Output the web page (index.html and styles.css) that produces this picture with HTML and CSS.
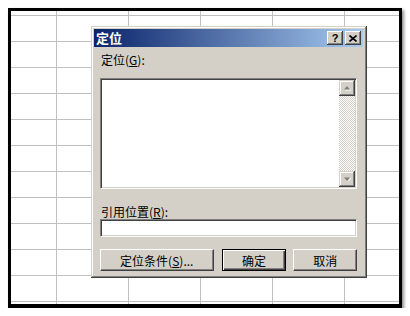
FILE: index.html
```html
<!DOCTYPE html>
<html lang="zh-CN">
<head>
  <meta charset="UTF-8">
  <meta name="viewport" content="width=device-width, initial-scale=1.0">
  <title>定位</title>
  <link rel="stylesheet" href="styles.css">
</head>
<body>
  <!-- Spreadsheet grid in a black frame -->
  <div class="sheet">

    <!-- Go To dialog -->
    <div class="dialog">
      <div class="titlebar">
        <span class="title">定位</span>
        <span class="tbtn tbtn-help">?</span>
        <span class="tbtn">
          <svg width="8" height="7" viewBox="0 0 8 7"><path d="M0.5 0.5 L7.5 6.5 M7.5 0.5 L0.5 6.5" stroke="#000" stroke-width="1.6" fill="none"/></svg>
        </span>
      </div>

      <div class="dlg-body">
        <div class="label">定位(<u>G</u>):</div>

        <div class="field listbox">
          <div class="list"></div>
          <div class="vscroll">
            <div class="sbtn">
              <svg width="7" height="5" viewBox="0 0 7 5"><path d="M1 4 L7 4" stroke="#fff"/><path d="M3 0 L0 3.5 L6 3.5 Z" fill="#808080"/></svg>
            </div>
            <div class="track"></div>
            <div class="sbtn">
              <svg width="7" height="5" viewBox="0 0 7 5"><path d="M0 0.5 L6 0.5 L3 4 Z" fill="#808080"/><path d="M4 4.5 L7 1" stroke="#fff"/></svg>
            </div>
          </div>
        </div>

        <div class="label label-ref">引用位置(<u>R</u>):</div>
        <div class="field input"></div>

        <div class="buttons">
          <button class="btn btn-special">定位条件(<u>S</u>)...</button>
          <button class="btn btn-default">确定</button>
          <button class="btn btn-cancel">取消</button>
        </div>
      </div>
    </div>

  </div>
</body>
</html>
```

FILE: styles.css
```css
body {
  margin: 0;
  background: #fff;
  font-family: "Noto Sans CJK SC", "SimSun", sans-serif;
  font-size: 12px;
  color: #000;
}
.sheet {
  position: relative;
  box-sizing: border-box;
  margin: 8px 0 0 8px;
  width: 394px;
  height: 300px;
  border-style: solid;
  border-color: #000;
  border-width: 3px 3px 4px 3px;
  box-shadow: 2px 2px 3px rgba(0, 0, 0, 0.45);
  background-color: #fff;
  background-image:
    linear-gradient(to right, #c0c0c0 0 1px, transparent 1px),
    linear-gradient(to bottom, #c0c0c0 0 1px, transparent 1px);
  background-size: 72px 100%, 100% 26px;
  background-position: 45px 0, 0 4px;
}

/* dialog window */
.dialog {
  position: absolute;
  left: 80px;
  top: 15px;
  box-sizing: border-box;
  width: 276px;
  height: 252px;
  padding: 3px 4px 3px 3px;
  background: #d4d0c8;
  box-shadow:
    inset -1px -1px #404040,
    inset 1px 1px #d4d0c8,
    inset -2px -2px #808080,
    inset 2px 2px #fff;
}
.titlebar {
  display: flex;
  align-items: center;
  gap: 2px;
  height: 18px;
  padding: 0 2px 0 2px;
  background: linear-gradient(to right, #0a246a, #a6caf0);
}
.title {
  flex: 1;
  color: #fff;
  font-weight: bold;
  font-size: 13px;
  line-height: 18px;
}
.tbtn {
  display: flex;
  align-items: center;
  justify-content: center;
  box-sizing: border-box;
  width: 16px;
  height: 14px;
  background: #d4d0c8;
  box-shadow:
    inset -1px -1px #404040,
    inset 1px 1px #fff,
    inset -2px -2px #808080;
}
.tbtn-help {
  font-family: "Liberation Sans", Arial, sans-serif;
  font-weight: bold;
  font-size: 11px;
  line-height: 14px;
}

.dlg-body {
  display: flex;
  flex-direction: column;
  padding: 0 6px 0 6px;
}
.label {
  height: 14px;
  line-height: 14px;
  margin-top: 6px;
  padding-left: 1px;
}
.label-ref {
  margin-top: 16px;
}

/* sunken fields */
.field {
  box-sizing: border-box;
  padding: 1px;
  background: #fff;
  border: 1px solid;
  border-color: #808080 #fff #fff #808080;
  box-shadow: inset 1px 1px #404040, inset -1px -1px #d4d0c8;
}
.listbox {
  display: flex;
  width: 257px;
  height: 111px;
  margin-top: 11px;
}
.list {
  flex: 1;
}
.vscroll {
  display: flex;
  flex-direction: column;
  width: 16px;
}
.sbtn {
  display: flex;
  align-items: center;
  justify-content: center;
  box-sizing: border-box;
  height: 16px;
  background: #d4d0c8;
  box-shadow:
    inset -1px -1px #404040,
    inset 1px 1px #d4d0c8,
    inset -2px -2px #808080,
    inset 2px 2px #fff;
}
.track {
  flex: 1;
  background: repeating-conic-gradient(#d4d0c8 0 25%, #fff 0 50%) 0 0 / 2px 2px;
}
.input {
  width: 257px;
  height: 18px;
}

/* buttons */
.buttons {
  display: flex;
  gap: 7px;
  margin-top: 12px;
}
.btn {
  box-sizing: border-box;
  height: 22px;
  padding: 0;
  font-family: inherit;
  font-size: 12px;
  color: #000;
  background: #d4d0c8;
  border: 1px solid;
  border-color: #fff #404040 #404040 #fff;
  box-shadow: inset -1px -1px #808080, inset 1px 1px #d4d0c8;
}
.btn-special {
  width: 114px;
  margin-right: 1px;
}
.btn-default {
  width: 65px;
  border-color: #000;
  box-shadow: inset 1px 1px #fff, inset -1px -1px #404040, inset -2px -2px #808080;
}
.btn-cancel {
  width: 64px;
}
```
